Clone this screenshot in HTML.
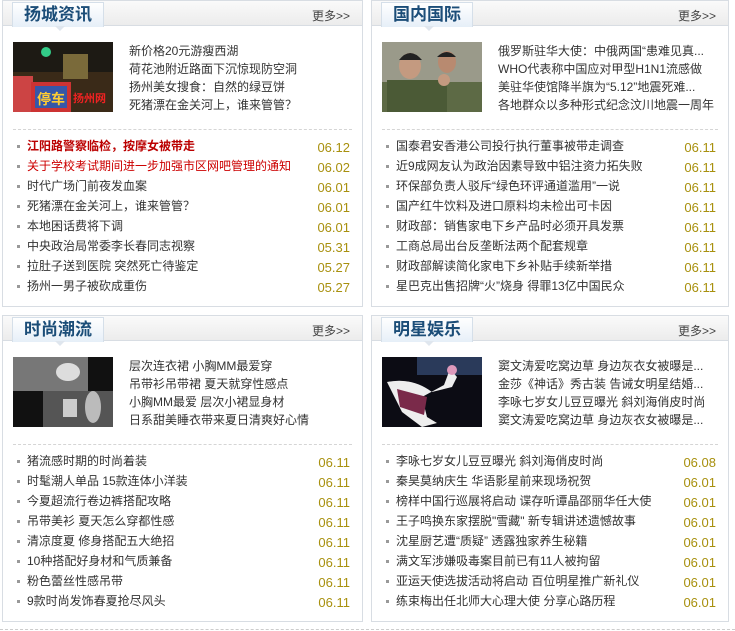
<!DOCTYPE html>
<html><head><meta charset="utf-8"><style>
*{margin:0;padding:0;box-sizing:border-box}
body{width:735px;height:631px;background:#fff;font-family:"Liberation Sans","Noto Sans CJK SC",sans-serif;font-size:12px;color:#333;position:relative;overflow:hidden}
.box{position:absolute;border:1px solid #d8dde3;background:#fff}
.hd{position:absolute;left:0;top:0;right:0;height:25px;background:linear-gradient(#fafafa,#ececec);border-bottom:1px solid #d8dde3}
.tab{position:absolute;left:9px;top:1px;width:92px;height:25px;background:linear-gradient(#fff,#e6eff8);border:1px solid #d5dfe9;border-bottom:none;font-size:17px;font-weight:bold;color:#1b4d78;text-align:center;line-height:24px}
.arr{position:absolute;left:52px;top:25px;width:0;height:0;border-left:5px solid transparent;border-right:5px solid transparent;border-top:5px solid #dfe6ee}
.more{position:absolute;right:12px;top:6px;font-size:12px;color:#444}
.pic{position:absolute;left:10px;top:41px;width:100px;height:70px}
.sum{position:absolute;left:126px;top:41px;line-height:18px;font-size:12px;color:#333;white-space:nowrap}
.dash{position:absolute;left:10px;right:10px;top:128px;border-top:1px dashed #d5d5d5}
ul{position:absolute;left:10px;right:12px;top:135px;list-style:none}
li{height:20px;line-height:20px;position:relative;padding-left:14px;white-space:nowrap}
li:before{content:"";position:absolute;left:4px;top:9px;width:3px;height:3px;background:#999}
li span{position:absolute;right:0;top:2px;color:#a8900e;font-size:13px;font-weight:normal}
.r{color:#c00}.rb{color:#b00;font-weight:bold}
</style></head><body>

<div class="box" style="left:2px;top:0;width:361px;height:307px">
<div class="hd"></div><div class="tab">扬城资讯</div><div class="arr"></div><div class="more">更多&gt;&gt;</div>
<svg class="pic" viewBox="0 0 100 70"><rect width="100" height="70" fill="#3a2a18"/><rect x="0" y="0" width="100" height="30" fill="#1d1a14"/><circle cx="33" cy="10" r="5" fill="#3c8"/><rect x="50" y="12" width="25" height="25" fill="#7a6a3a"/><rect x="0" y="34" width="20" height="36" fill="#c44"/><rect x="18" y="40" width="40" height="30" fill="#c33"/><rect x="22" y="44" width="32" height="22" fill="#3657a8"/><text x="24" y="62" font-size="14" font-weight="bold" fill="#fc3">停车</text><text x="60" y="60" font-size="11" font-weight="bold" fill="#e22">扬州网</text></svg>
<div class="sum">新价格20元游瘦西湖<br>荷花池附近路面下沉惊现防空洞<br>扬州美女搜食：自然的绿豆饼<br>死猪漂在金关河上，谁来管管？</div>
<div class="dash"></div>
<ul>
<li class="rb">江阳路警察临检，按摩女被带走<span>06.12</span></li>
<li class="r">关于学校考试期间进一步加强市区网吧管理的通知<span>06.02</span></li>
<li>时代广场门前夜发血案<span>06.01</span></li>
<li>死猪漂在金关河上，谁来管管？<span>06.01</span></li>
<li>本地困话费将下调<span>06.01</span></li>
<li>中央政治局常委李长春同志视察<span>05.31</span></li>
<li>拉肚子送到医院 突然死亡待鉴定<span>05.27</span></li>
<li>扬州一男子被砍成重伤<span>05.27</span></li>
</ul></div>

<div class="box" style="left:371px;top:0;width:358px;height:307px">
<div class="hd"></div><div class="tab">国内国际</div><div class="arr"></div><div class="more">更多&gt;&gt;</div>
<svg class="pic" viewBox="0 0 100 70"><rect width="100" height="70" fill="#9a9a8a"/><rect x="0" y="40" width="100" height="30" fill="#5d6a45"/><ellipse cx="28" cy="24" rx="11" ry="13" fill="#c49a80"/><path d="M17 18 Q28 4 40 18" fill="#222"/><ellipse cx="65" cy="20" rx="9" ry="11" fill="#b88a70"/><path d="M55 15 Q65 5 74 15" fill="#222"/><rect x="5" y="38" width="60" height="32" fill="#4b5a36"/><circle cx="62" cy="38" r="6" fill="#c49a80"/></svg>
<div class="sum">俄罗斯驻华大使：中俄两国“患难见真...<br>WHO代表称中国应对甲型H1N1流感做<br>美驻华使馆降半旗为“5.12”地震死难...<br>各地群众以多种形式纪念汶川地震一周年</div>
<div class="dash"></div>
<ul>
<li>国泰君安香港公司投行执行董事被带走调查<span>06.11</span></li>
<li>近9成网友认为政治因素导致中铝注资力拓失败<span>06.11</span></li>
<li>环保部负责人驳斥“绿色环评通道滥用”一说<span>06.11</span></li>
<li>国产红牛饮料及进口原料均未检出可卡因<span>06.11</span></li>
<li>财政部：销售家电下乡产品时必须开具发票<span>06.11</span></li>
<li>工商总局出台反垄断法两个配套规章<span>06.11</span></li>
<li>财政部解读简化家电下乡补贴手续新举措<span>06.11</span></li>
<li>星巴克出售招牌“火”烧身 得罪13亿中国民众<span>06.11</span></li>
</ul></div>

<div class="box" style="left:2px;top:315px;width:361px;height:307px">
<div class="hd"></div><div class="tab">时尚潮流</div><div class="arr"></div><div class="more">更多&gt;&gt;</div>
<svg class="pic" viewBox="0 0 100 70"><rect width="100" height="70" fill="#111"/><rect x="0" y="0" width="75" height="34" fill="#777"/><rect x="30" y="34" width="70" height="36" fill="#555"/><rect x="50" y="42" width="14" height="18" fill="#ccc"/><ellipse cx="80" cy="50" rx="8" ry="16" fill="#bbb"/><ellipse cx="55" cy="15" rx="12" ry="9" fill="#ddd"/></svg>
<div class="sum">层次连衣裙 小胸MM最爱穿<br>吊带衫吊带裙 夏天就穿性感点<br>小胸MM最爱 层次小裙显身材<br>日系甜美睡衣带来夏日清爽好心情</div>
<div class="dash"></div>
<ul>
<li>猪流感时期的时尚着装<span>06.11</span></li>
<li>时髦潮人单品 15款连体小洋装<span>06.11</span></li>
<li>今夏超流行卷边裤搭配攻略<span>06.11</span></li>
<li>吊带美衫 夏天怎么穿都性感<span>06.11</span></li>
<li>清凉度夏 修身搭配五大绝招<span>06.11</span></li>
<li>10种搭配好身材和气质兼备<span>06.11</span></li>
<li>粉色蕾丝性感吊带<span>06.11</span></li>
<li>9款时尚发饰春夏抢尽风头<span>06.11</span></li>
</ul></div>

<div class="box" style="left:371px;top:315px;width:358px;height:307px">
<div class="hd"></div><div class="tab">明星娱乐</div><div class="arr"></div><div class="more">更多&gt;&gt;</div>
<svg class="pic" viewBox="0 0 100 70"><rect width="100" height="70" fill="#0c0c14"/><rect x="35" y="0" width="65" height="18" fill="#2a3a5a"/><path d="M5 25 Q30 20 50 35 L70 30 L75 20 L68 12 L62 28 L40 40 L45 60 L55 66 L40 70 L20 55 Z" fill="#eee"/><path d="M15 32 L45 40 L42 58 L18 50Z" fill="#7a2a4a"/><circle cx="70" cy="13" r="5" fill="#d9b"/></svg>
<div class="sum">窦文涛爱吃窝边草 身边灰衣女被曝是...<br>金莎《神话》秀古装 告诫女明星结婚...<br>李咏七岁女儿豆豆曝光 斜刘海俏皮时尚<br>窦文涛爱吃窝边草 身边灰衣女被曝是...</div>
<div class="dash"></div>
<ul>
<li>李咏七岁女儿豆豆曝光 斜刘海俏皮时尚<span>06.08</span></li>
<li>秦昊莫纳庆生 华语影星前来现场祝贺<span>06.01</span></li>
<li>榜样中国行巡展将启动 谍存听谭晶邵丽华任大使<span>06.01</span></li>
<li>王子鸣换东家摆脱"雪藏" 新专辑讲述遗憾故事<span>06.01</span></li>
<li>沈星厨艺遭“质疑” 透露独家养生秘籍<span>06.01</span></li>
<li>满文军涉嫌吸毒案目前已有11人被拘留<span>06.01</span></li>
<li>亚运天使选拔活动将启动 百位明星推广新礼仪<span>06.01</span></li>
<li>练束梅出任北师大心理大使 分享心路历程<span>06.01</span></li>
</ul></div>

<div style="position:absolute;left:0;right:0;top:629px;border-top:1px dashed #ccc"></div>
</body></html>
